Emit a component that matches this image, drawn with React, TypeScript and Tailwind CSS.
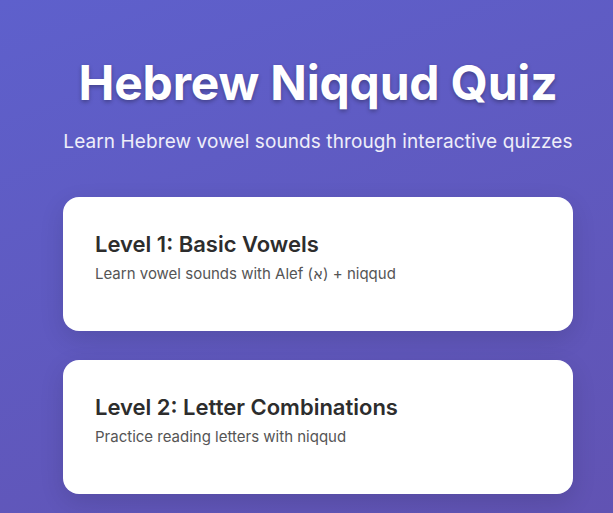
export default function App() {
  const levels = [
    { title: "Level 1: Basic Vowels", desc: "Learn vowel sounds with Alef (א) + niqqud" },
    { title: "Level 2: Letter Combinations", desc: "Practice reading letters with niqqud" },
  ];
  return (
    <div
      className="min-h-[513px] w-full overflow-hidden bg-[linear-gradient(160deg,#5e60cc_0%,#6153b3_100%)]"
      style={{ fontFamily: "Inter, 'Noto Sans', sans-serif" }}
    >
      <div className="ml-[63px] flex w-[510px] flex-col items-stretch pt-[54px]">
        <h1 className="text-center text-[48px] font-bold leading-[58px] tracking-[-0.2px] text-white [text-shadow:0_2px_4px_rgba(0,0,0,0.3)]">
          Hebrew Niqqud Quiz
        </h1>
        <p className="mt-[17px] text-center text-[19px] leading-[26px] tracking-[0.1px] text-white/90">
          Learn Hebrew vowel sounds through interactive quizzes
        </p>
        <div className="mt-[42px] flex flex-col gap-[29px]">
          {levels.map((l) => (
            <div
              key={l.title}
              className="h-[134px] rounded-[16px] bg-white px-8 pt-[32px] shadow-[0_8px_24px_rgba(0,0,0,0.12)]"
            >
              <h2 className="text-[22px] font-semibold leading-[30px] text-[#2d2d2d]">{l.title}</h2>
              <p
                className="mt-[4px] text-[15px] leading-[22px] text-[#555]"
                style={{ fontFamily: "Inter, 'Noto Sans', 'DejaVu Sans', sans-serif" }}
              >
                {l.desc}
              </p>
            </div>
          ))}
        </div>
      </div>
    </div>
  );
}
